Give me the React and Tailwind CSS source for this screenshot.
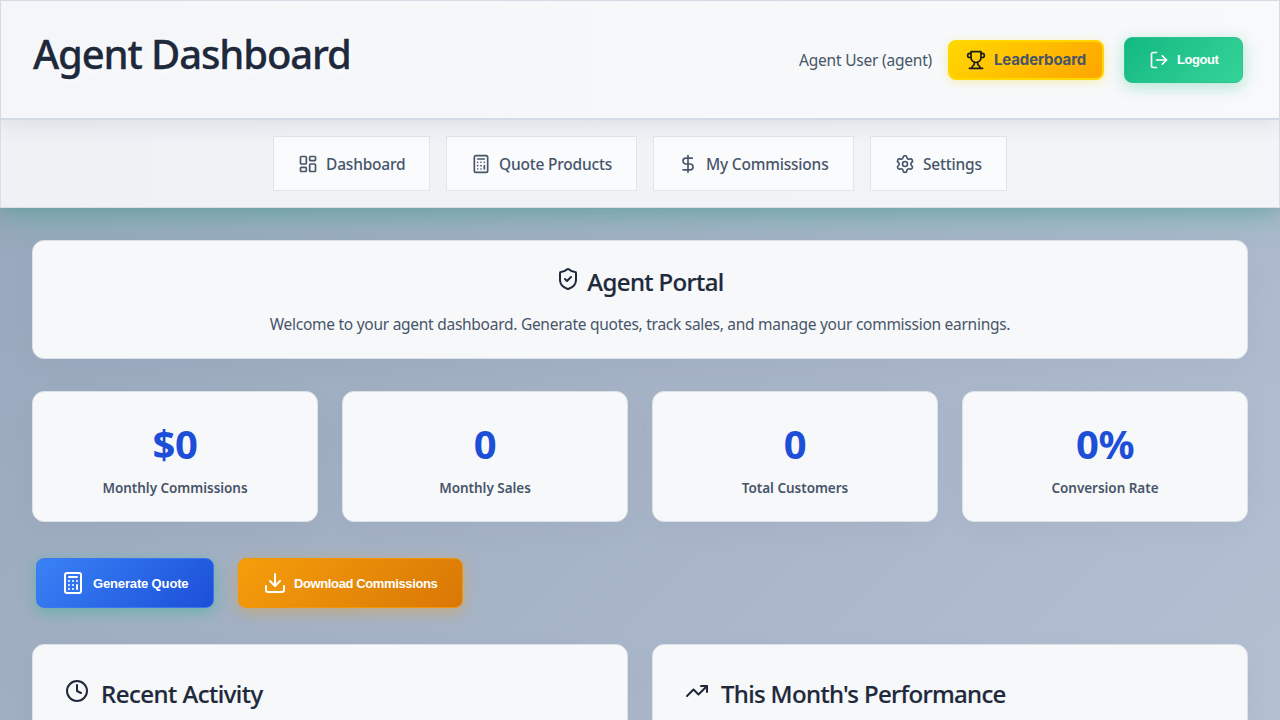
import { LayoutDashboard, Calculator, DollarSign, Settings, ShieldCheck, Download, Clock, TrendingUp, LogOut } from "lucide-react";

const ui = "font-['Noto_Sans','Open_Sans',sans-serif]";

function Trophy() {
  return (
    <svg width="20" height="20" viewBox="0 0 24 24" fill="none" stroke="#1a1a1a" strokeWidth="2" strokeLinecap="round" strokeLinejoin="round" className="shrink-0">
      <path d="M6 9H4.5a2.5 2.5 0 0 1 0-5H6" />
      <path d="M18 9h1.5a2.5 2.5 0 0 0 0-5H18" />
      <path d="M4 22h16" />
      <path d="M10 14.66V17c0 .55-.47.98-.97 1.21C7.85 18.75 7 20.24 7 22" />
      <path d="M14 14.66V17c0 .55.47.98.97 1.21C16.15 18.75 17 20.24 17 22" />
      <path d="M18 2H6v7a6 6 0 0 0 12 0V2Z" />
    </svg>
  );
}

const nav = [
  { label: "Dashboard", icon: LayoutDashboard, w: "w-[157px]" },
  { label: "Quote Products", icon: Calculator, w: "w-[191px]" },
  { label: "My Commissions", icon: DollarSign, w: "w-[201px]" },
  { label: "Settings", icon: Settings, w: "w-[137px]" },
];

const stats = [
  { value: "$0", label: "Monthly Commissions" },
  { value: "0", label: "Monthly Sales" },
  { value: "0", label: "Total Customers" },
  { value: "0%", label: "Conversion Rate" },
];

const card = "rounded-xl border border-[#dce1e9] bg-[#f7f8fa] shadow-[0_8px_32px_rgba(31,41,55,0.03)]";

export default function App() {
  return (
    <div className={`h-[720px] overflow-hidden bg-linear-135 from-[#96a5ba] to-[#b4c0d2] text-[#1e293b] ${ui}`}>
      <header className="relative shadow-[0_8px_32px_rgba(16,185,129,0.3),0_4px_16px_rgba(71,85,105,0.2)]">
        <div className="relative z-10 flex h-[120px] items-center justify-between border border-b-2 border-[#d5dbe5] bg-linear-to-r from-[#f5f6f9] to-[#f7f9fa] pr-9 pl-8 shadow-[0_4px_20px_rgba(71,85,105,0.12)]">
          <h1 className="mb-[11px] text-[40px] leading-[60px] font-medium tracking-[-1.12px] whitespace-nowrap [-webkit-text-stroke:0.3px_#1e293b] [text-shadow:0_2px_10px_white]">Agent Dashboard</h1>
          <div className="flex items-center">
            <span className="mt-0.5 mr-4 text-[15.5px] tracking-[-0.21px] whitespace-nowrap text-[#475569]">Agent User (agent)</span>
            <button className="mr-5 flex h-10 w-[156px] items-center gap-2 rounded-lg border-2 border-[#ffd700] bg-linear-135 from-[#ffd700] to-[#ffa500] pl-4 font-[Inter,sans-serif] text-[15px] font-bold tracking-[-0.15px] whitespace-nowrap text-[#475569] shadow-[0_2px_8px_rgba(255,215,0,0.3)]">
              <Trophy />
              <span className="mt-0.5">Leaderboard</span>
            </button>
            <button className="flex h-[46px] w-[119px] items-center gap-2 rounded-lg border border-[#2fc08f] bg-linear-135 from-[#10b981] to-[#34d399] pl-6 font-['Liberation_Sans',sans-serif] text-[13px] font-bold tracking-[-0.45px] text-white shadow-[0_4px_15px_rgba(16,185,129,0.3)]">
              <LogOut size={20} className="shrink-0" />
              Logout
            </button>
          </div>
        </div>
        <nav className="flex h-[88px] items-center justify-center gap-4 border-x border-b border-[#d9dfe8] bg-linear-to-r from-[#eff1f5] to-[#f3f4f7]">
          {nav.map(({ label, icon: Icon, w }) => (
            <a key={label} className={`flex h-[55px] ${w} items-center gap-2 border border-[#e2e6ec] bg-[#fafbfd] pl-6 text-[15.5px] font-medium tracking-[-0.2px] whitespace-nowrap text-[#475569]`}>
              <Icon size={20} className="shrink-0" />
              <span className="mt-[3px]">{label}</span>
            </a>
          ))}
        </nav>
      </header>

      <main className="relative px-8 pt-8">
        <section className={`flex h-[119px] flex-col items-center pt-[23px] ${card}`}>
          <h2 className="flex h-9 items-center gap-2 text-[24px] font-medium tracking-[-0.62px] [-webkit-text-stroke:0.2px_#1e293b]">
            <ShieldCheck size={24} className="mb-1.5" />
            <span className="-ml-px">Agent Portal</span>
          </h2>
          <p className="mt-3 text-[15.5px] leading-6 tracking-[-0.27px] whitespace-nowrap text-[#475569]">Welcome to your agent dashboard. Generate quotes, track sales, and manage your commission earnings.</p>
        </section>

        <section className="mt-8 grid grid-cols-4 gap-6">
          {stats.map(({ value, label }) => (
            <div key={label} className={`flex h-[131px] flex-col items-center pt-[26px] ${card}`}>
              <div className="text-[40px] leading-[52px] font-bold tracking-[-0.5px] text-[#1d4ed8]">{value}</div>
              <div className="mt-2 text-[13.5px] leading-5 font-semibold tracking-[-0.03px] text-[#475569]">{label}</div>
            </div>
          ))}
        </section>

        <section className="mt-9 flex gap-6 pl-1 font-['Liberation_Sans',sans-serif] text-[13px] font-bold text-white">
          <button className="flex h-[50px] w-[178px] items-center gap-2 rounded-lg border border-[#3b76ee] bg-linear-135 from-[#3b82f6] to-[#1d4ed8] pl-6 tracking-[-0.15px] whitespace-nowrap shadow-[0_4px_15px_rgba(16,185,129,0.4)]">
            <Calculator size={24} className="shrink-0" />
            <span className="mt-px">Generate Quote</span>
          </button>
          <button className="flex h-[50px] w-[225px] items-center gap-2 rounded-lg border border-[#f09409] bg-linear-135 from-[#f59e0b] to-[#d97706] pl-6 tracking-[-0.38px] whitespace-nowrap shadow-[0_4px_15px_rgba(245,158,11,0.4)]">
            <Download size={24} className="shrink-0" />
            <span className="mt-px -ml-px">Download Commissions</span>
          </button>
        </section>

        <section className="mt-9 grid grid-cols-2 gap-6">
          <div className={`h-[300px] px-8 pt-[31px] ${card}`}>
            <h3 className="flex h-9 items-center gap-3 text-[24px] font-medium tracking-[-0.5px] whitespace-nowrap [-webkit-text-stroke:0.2px_#1e293b]">
              <Clock size={24} className="mb-1.5" />
              Recent Activity
            </h3>
          </div>
          <div className={`h-[300px] px-8 pt-[31px] ${card}`}>
            <h3 className="flex h-9 items-center gap-3 text-[24px] font-medium tracking-[-0.66px] whitespace-nowrap [-webkit-text-stroke:0.2px_#1e293b]">
              <TrendingUp size={24} className="mb-1.5" />
              This Month's Performance
            </h3>
          </div>
        </section>
      </main>
    </div>
  );
}
